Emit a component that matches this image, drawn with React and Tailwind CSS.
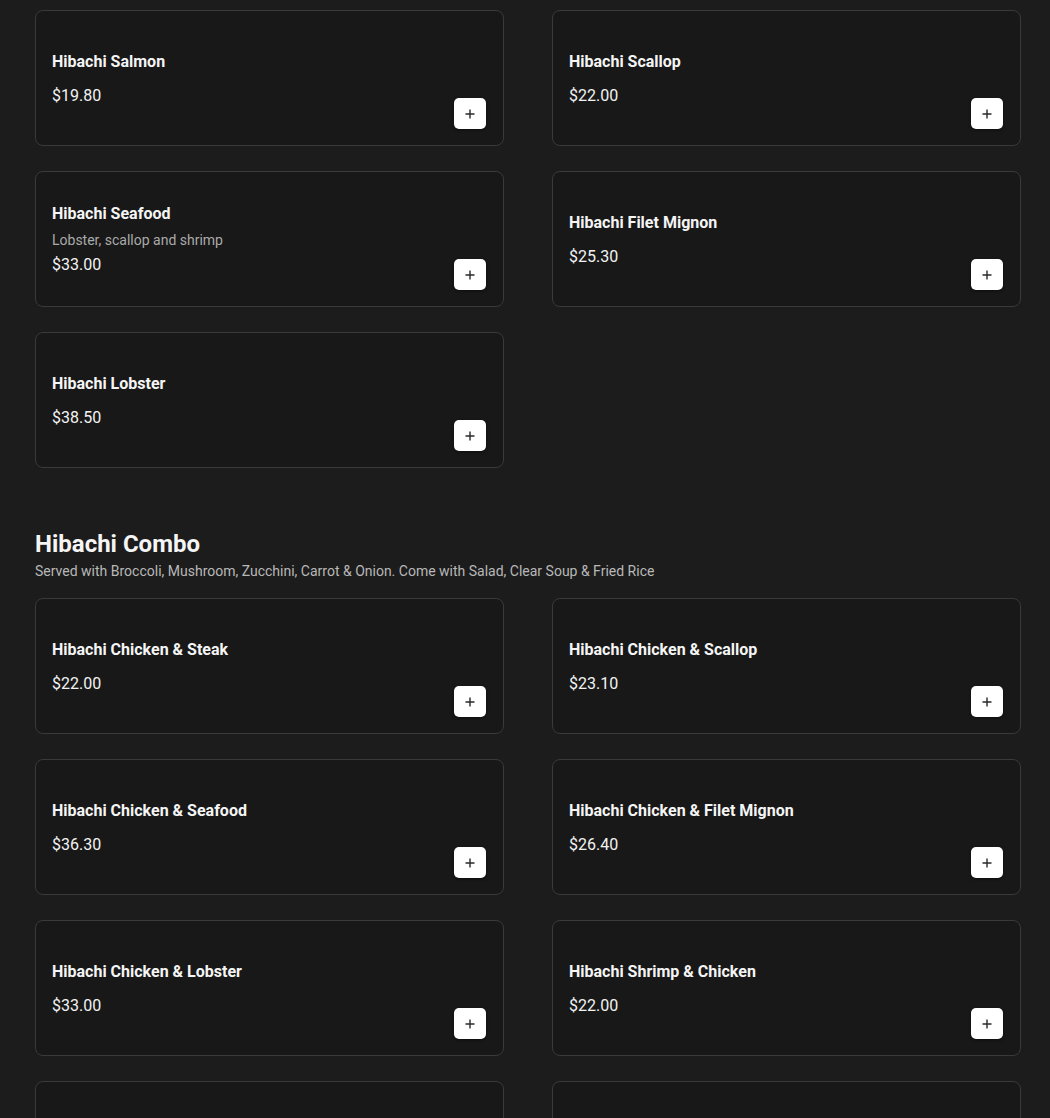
import React from 'react';

const hibachi = [
  { name: 'Hibachi Salmon', price: '$19.80' },
  { name: 'Hibachi Scallop', price: '$22.00' },
  { name: 'Hibachi Seafood', desc: 'Lobster, scallop and shrimp', price: '$33.00' },
  { name: 'Hibachi Filet Mignon', price: '$25.30' },
  { name: 'Hibachi Lobster', price: '$38.50' },
];

const combo = [
  { name: 'Hibachi Chicken & Steak', price: '$22.00' },
  { name: 'Hibachi Chicken & Scallop', price: '$23.10' },
  { name: 'Hibachi Chicken & Seafood', price: '$36.30' },
  { name: 'Hibachi Chicken & Filet Mignon', price: '$26.40' },
  { name: 'Hibachi Chicken & Lobster', price: '$33.00' },
  { name: 'Hibachi Shrimp & Chicken', price: '$22.00' },
];

const PlusIcon = () => (
  <svg width="10" height="10" viewBox="0 0 10 10" fill="none">
    <path d="M5 0.5v9M0.5 5h9" stroke="#2a2a2a" strokeWidth="1.4" />
  </svg>
);

const ItemCard = ({ item }) => {
  return (
    <div className="relative h-[136px] rounded-lg border border-[#3a3a3a] bg-[#181818] px-4 flex items-center">
      {item && (
        <>
          <div className={`flex flex-col ${item.desc ? '' : 'pt-[2px]'}`}>
            <h4 className="text-base leading-6 font-bold text-[#f5f5f5]">{item.name}</h4>
            {item.desc && (
              <p className="mt-1 text-sm leading-5 text-[#aaaaaa]">{item.desc}</p>
            )}
            <p className={`${item.desc ? 'mt-[3px]' : 'mt-[10px]'} text-base leading-6 text-[#f2f2f2]`}>
              {item.price}
            </p>
          </div>
          <button className="absolute right-[17px] bottom-4 w-8 h-[31px] rounded-[5px] bg-white flex items-center justify-center shadow-[0_1px_3px_rgba(0,0,0,0.5)]">
            <PlusIcon />
          </button>
        </>
      )}
    </div>
  );
};

const App = () => {
  return (
    <div
      className="h-[1118px] bg-[#1c1c1c] pt-[10px] pl-[35px] pr-[29px] overflow-hidden"
      style={{ fontFamily: 'Roboto, "Liberation Sans", sans-serif' }}
    >
      {/* Hibachi entrees (top cut off) */}
      <div className="grid grid-cols-2 gap-x-[48px] gap-y-[25px]">
        {hibachi.map((item) => (
          <ItemCard key={item.name} item={item} />
        ))}
      </div>

      {/* Hibachi Combo */}
      <div className="mt-[60px]">
        <h3 className="text-2xl leading-8 font-bold text-[#f5f5f5]">Hibachi Combo</h3>
        <p className="mt-[1px] text-sm leading-5 text-[#b8b8b8]">
          Served with Broccoli, Mushroom, Zucchini, Carrot &amp; Onion. Come with Salad, Clear Soup &amp; Fried Rice
        </p>
        <div className="mt-[17px] grid grid-cols-2 gap-x-[48px] gap-y-[25px]">
          {combo.map((item) => (
            <ItemCard key={item.name} item={item} />
          ))}
          {/* next row, cut off by the frame */}
          <ItemCard />
          <ItemCard />
        </div>
      </div>
    </div>
  );
};

export default App;
